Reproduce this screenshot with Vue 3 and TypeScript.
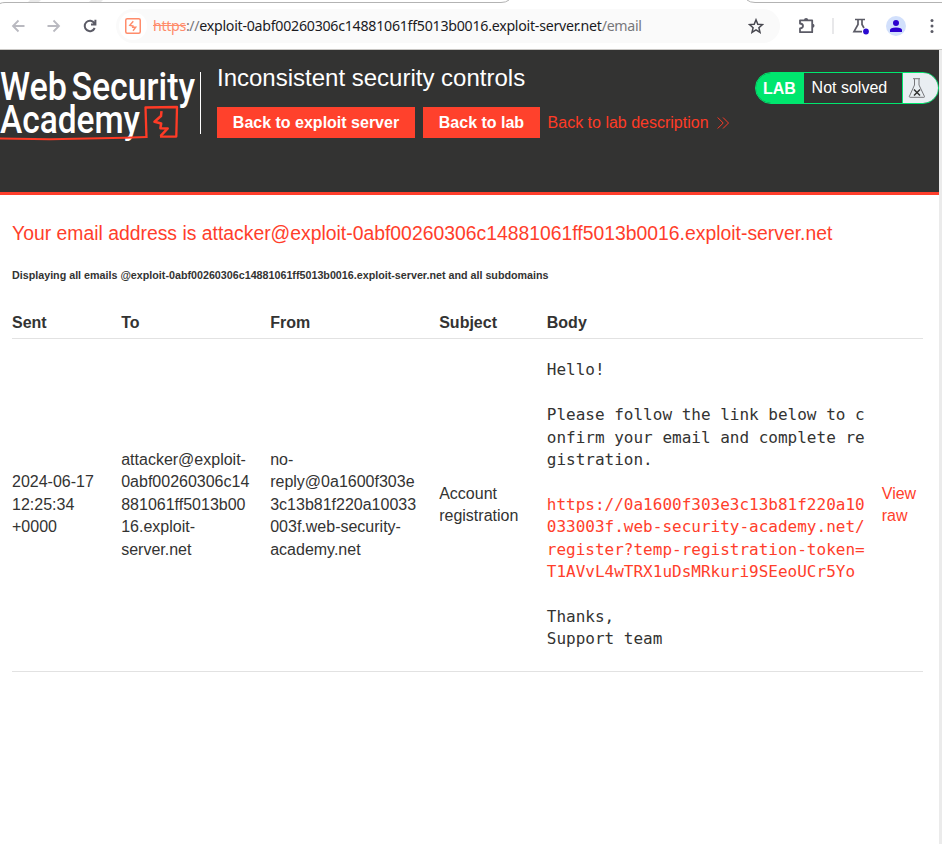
<script setup lang="ts">
interface Column {
  title: string
  lines: string[]
}

const columns: Column[] = [
  { title: 'Sent', lines: ['2024-06-17', '12:25:34', '+0000'] },
  { title: 'To', lines: ['attacker@exploit-', '0abf00260306c14', '881061ff5013b00', '16.exploit-', 'server.net'] },
  { title: 'From', lines: ['no-', 'reply@0a1600f303e', '3c13b81f220a10033', '003f.web-security-', 'academy.net'] },
  { title: 'Subject', lines: ['Account', 'registration'] },
]

const intro = 'Hello!\n\nPlease follow the link below to c\nonfirm your email and complete re\ngistration.\n\n'
const link = 'https://0a1600f303e3c13b81f220a10\n033003f.web-security-academy.net/\nregister?temp-registration-token=\nT1AVvL4wTRX1uDsMRkuri9SEeoUCr5Yo'
const outro = '\n\nThanks,\nSupport team'
</script>

<template>
  <div class="window">
    <header class="toolbar">
      <svg class="tab-edge" width="942" height="6" viewBox="0 0 942 6" fill="none">
        <path d="M30 0h11l-2 2H28zM91 0h12l-2 2H89z" fill="#e9e9e9" />
        <path d="M0 3.500Q2 2.500 5 2.500H501Q506 2.500 509 0M747 0Q750 2.500 755 2.500H942" stroke="#b3b3b3" />
      </svg>
      <nav class="nav">
        <svg width="14" height="14" viewBox="0 0 14 14" fill="none" stroke="#b9b9c0" stroke-width="1.800"><path d="M13.500 7H2.300M7.500 1.500L2 7l5.500 5.500" /></svg>
        <svg width="14" height="14" viewBox="0 0 14 14" fill="none" stroke="#b9b9c0" stroke-width="1.800"><path d="M.5 7h11.200M6.500 1.500L12 7l-5.500 5.500" /></svg>
        <svg width="14" height="14" viewBox="0 0 14 14" fill="none" stroke="#5b5b66" stroke-width="2"><path d="M11.700 9A5.200 5.200 0 1 1 11.400 4.300L12.300 5.600M12.400.8V5.500H8" /></svg>
      </nav>
      <div class="address">
        <span class="site">
          <svg width="16" height="16" viewBox="0 0 16 16" fill="none" stroke="#ff8c6b" stroke-width="1.500"><rect x=".75" y=".75" width="14.500" height="14.500" rx="1.500" /><path d="M8.300 3.300L4.800 7.300l3.200.7-.3 1.300h3L8 12.700" stroke-width="1.400" /></svg>
        </span>
        <span class="url"><s>https</s><i>://</i><b>exploit-0abf00260306c14881061ff5013b0016.exploit-server.net</b><i>/email</i></span>
        <svg class="star" width="16" height="16" viewBox="0 0 16 16" fill="none" stroke="#484850" stroke-width="1.500"><path d="M8 1.800l1.800 4.400 4.700.4-3.600 3.100 1.100 4.600L8 11.800l-4 2.500 1.100-4.600L1.500 6.600l4.700-.4z" /></svg>
      </div>
      <svg class="puzzle" width="18" height="18" viewBox="0 0 18 18"><path d="M2 3.300h12.200v11.900H2v-3.700q3-.3 3-2.500T2 6.500z" fill="none" stroke="#5b5b66" stroke-width="1.800" stroke-linejoin="round" /><path d="M6 3a2.100 2.100 0 0 1 4.200 0zM14.500 6.800a2 2 0 0 1 0 4z" fill="#5b5b66" /></svg>
      <span class="separator"></span>
      <svg class="flask" width="18" height="18" viewBox="0 0 18 18"><path d="M3 2.500h10M6 2.500v5L2 14.700h8M10 2.500v5l2 3.500" fill="none" stroke="#5b5b66" stroke-width="1.700" /><circle cx="14" cy="14.500" r="2.900" fill="#2b0bd0" /></svg>
      <svg class="avatar" width="20" height="20" viewBox="0 0 20 20"><circle cx="10" cy="10" r="10" fill="#d2e0fc" /><circle cx="10" cy="7" r="3" fill="#2b00cf" /><path d="M4 16v-2q0-2.500 6-2.500t6 2.500v2z" fill="#2b00cf" /></svg>
      <svg class="more" width="4" height="16" viewBox="0 0 4 16" fill="#5b5b66"><circle cx="2" cy="2.500" r="1.500" /><circle cx="2" cy="8" r="1.500" /><circle cx="2" cy="13.500" r="1.500" /></svg>
    </header>

    <div class="viewport">
      <section class="banner">
        <svg class="logo" width="201" height="74" viewBox="0 0 201 74">
          <g class="logo-text">
            <text x="0" y="30.400" textLength="67" lengthAdjust="spacingAndGlyphs">Web</text>
            <text x="71.500" y="30.400" textLength="123.500" lengthAdjust="spacingAndGlyphs">Security</text>
            <text x="0" y="63" textLength="140" lengthAdjust="spacingAndGlyphs">Academy</text>
          </g>
          <g fill="none" stroke="#ff3b26" stroke-linejoin="round">
            <path d="M0 68.500l50 .7 75-1.500 21.500-.7" stroke-width="2" />
            <path d="M146.500 68l-1-30.500 31.500-.5-.7 29.500-16.300.2" stroke-width="2.300" />
            <path d="M161.500 41.200l-.5 4.800-6.500 5.800 6.700 1.700-.8 4.700 7.300.2-7.200 7.800" stroke-width="2.500" />
          </g>
          <path d="M200.500 2v62" stroke="#fff" />
        </svg>
        <div class="heading">
          <h2>Inconsistent security controls</h2>
          <div class="actions">
            <a class="button">Back to exploit server</a>
            <a class="button">Back to lab</a>
            <a class="description">Back to lab description
              <svg width="12" height="12" viewBox="0 0 12 12" fill="none" stroke="#ff3b26"><path d="M.7.500L6.200 6 .7 11.500M6 .500L11.500 6 6 11.500" /></svg>
            </a>
          </div>
        </div>
        <div class="status">
          <strong>LAB</strong><span>Not solved</span>
          <div class="status-icon">
            <svg width="18" height="20" viewBox="0 0 18 20" fill="none"><path d="M5 .7h7M6.500 1v6L1.300 18.500q0 .8.800.8h13.800q.8 0 .6-.8L11 7V1" stroke="#77777b" /><path d="M6 11.500l6 6M12 11.500l-6 6" stroke="#333332" stroke-width="1.500" /></svg>
          </div>
        </div>
      </section>

      <main>
        <h1>Your email address is attacker@exploit-0abf00260306c14881061ff5013b0016.exploit-server.net</h1>
        <h6>Displaying all emails @exploit-0abf00260306c14881061ff5013b0016.exploit-server.net and all subdomains</h6>
        <div class="row head">
          <span v-for="column in columns" :key="column.title">{{ column.title }}</span>
          <span>Body</span>
        </div>
        <div class="row message">
          <div v-for="column in columns" :key="column.title">{{ column.lines.join('\n') }}</div>
          <pre>{{ intro }}<a>{{ link }}</a>{{ outro }}</pre>
          <a class="view">View<br>raw</a>
        </div>
      </main>
    </div>
  </div>
</template>

<style>
body { margin: 0; background: #fff; overflow: hidden; }
</style>

<style scoped>
* { box-sizing: border-box; }
.window { width: 942px; height: 844px; display: flex; flex-direction: column; overflow: hidden; font: 16px/22.4px "Liberation Sans", Arial, sans-serif; color: #333332; }
.toolbar { position: relative; height: 50px; flex: none; display: flex; align-items: center; padding: 2px 0 0 11px; border-bottom: 1px solid #c9c7c4; }
.toolbar svg { display: block; flex: none; }
.toolbar .tab-edge { position: absolute; left: 0; top: 0; }
.nav { display: flex; gap: 22px; width: 105px; flex: none; }
.address { width: 664px; height: 34px; border-radius: 17px; background: #fafafa; display: flex; align-items: center; flex: none; }
.site { width: 28px; height: 28px; margin-left: 3px; border-radius: 14px; background: #fff; display: flex; align-items: center; justify-content: center; }
.url { width: 600px; margin-left: 6px; font: 14.2px/20px "Noto Sans", sans-serif; letter-spacing: -0.33px; color: #1b1b1f; white-space: nowrap; }
.url s { color: #ff8c6b; }
.url b { font-weight: 400; letter-spacing: -0.26px; }
.url i { color: #77777b; font-style: normal; }
.star { margin-left: -5px; }
.puzzle { margin-left: 18px; }
.separator { width: 2px; height: 16px; margin-left: 16px; background: #e8e8ea; }
.flask { margin-left: 18px; }
.avatar { margin-left: 16px; }
.more { margin-left: 24px; }
.viewport { flex: 1; border-right: 3px solid #ebebeb; }
.banner { height: 145px; background: #333332; border-bottom: 3px solid #ff3e2b; display: flex; align-items: flex-start; }
.logo { margin-top: 20px; flex: none; overflow: visible; }
.logo-text { font: 500 38px Roboto, sans-serif; fill: #fff; }
.heading { margin-left: 16px; padding-top: 11px; flex: 1; }
h2 { margin: 0; font-size: 24px; line-height: 34px; font-weight: 400; color: #fff; }
.actions { display: flex; gap: 8px; margin-top: 12px; height: 31px; }
.button { padding: 0 15.84px; line-height: 31px; font-weight: 700; color: #fff; background: #ff412c; white-space: nowrap; }
.description { line-height: 31px; color: #ff3b26; white-space: nowrap; display: flex; align-items: center; gap: 8px; margin-left: -.4px; }
.status { width: 184px; height: 32px; margin-top: 22px; display: flex; border: 1px solid #00e66e; border-radius: 16px; overflow: hidden; color: #fff; flex: none; }
.status strong { width: 48px; padding-left: 7px; line-height: 32px; background: #00e66e; }
.status span { width: 98px; padding-left: 7.6px; line-height: 29px; }
.status-icon { flex: 1; border-left: 1px solid #00e66e; background: #e9eef2; padding: 5px 0 0 5px; }
.status-icon svg { display: block; }
main { padding: 24px 16px 0 12px; }
h1 { margin: 0; font-size: 19.36px; line-height: 28px; font-weight: 400; color: #ff3e2b; white-space: nowrap; }
h6 { margin: 20px 0 0; font-size: 10.72px; line-height: 16px; font-weight: 700; }
.row { display: grid; grid-template-columns: 109.2px 149px 169px 107.6px 335px 1fr; border-bottom: 1px solid #e2e2e2; }
.head { margin-top: 23px; height: 33px; line-height: 33px; font-weight: 700; }
.message { height: 333px; align-items: center; white-space: pre; }
.message a { color: #ff3e2b; }
pre { margin: 0; font: 16px/22.4px "DejaVu Sans Mono", monospace; }
</style>
